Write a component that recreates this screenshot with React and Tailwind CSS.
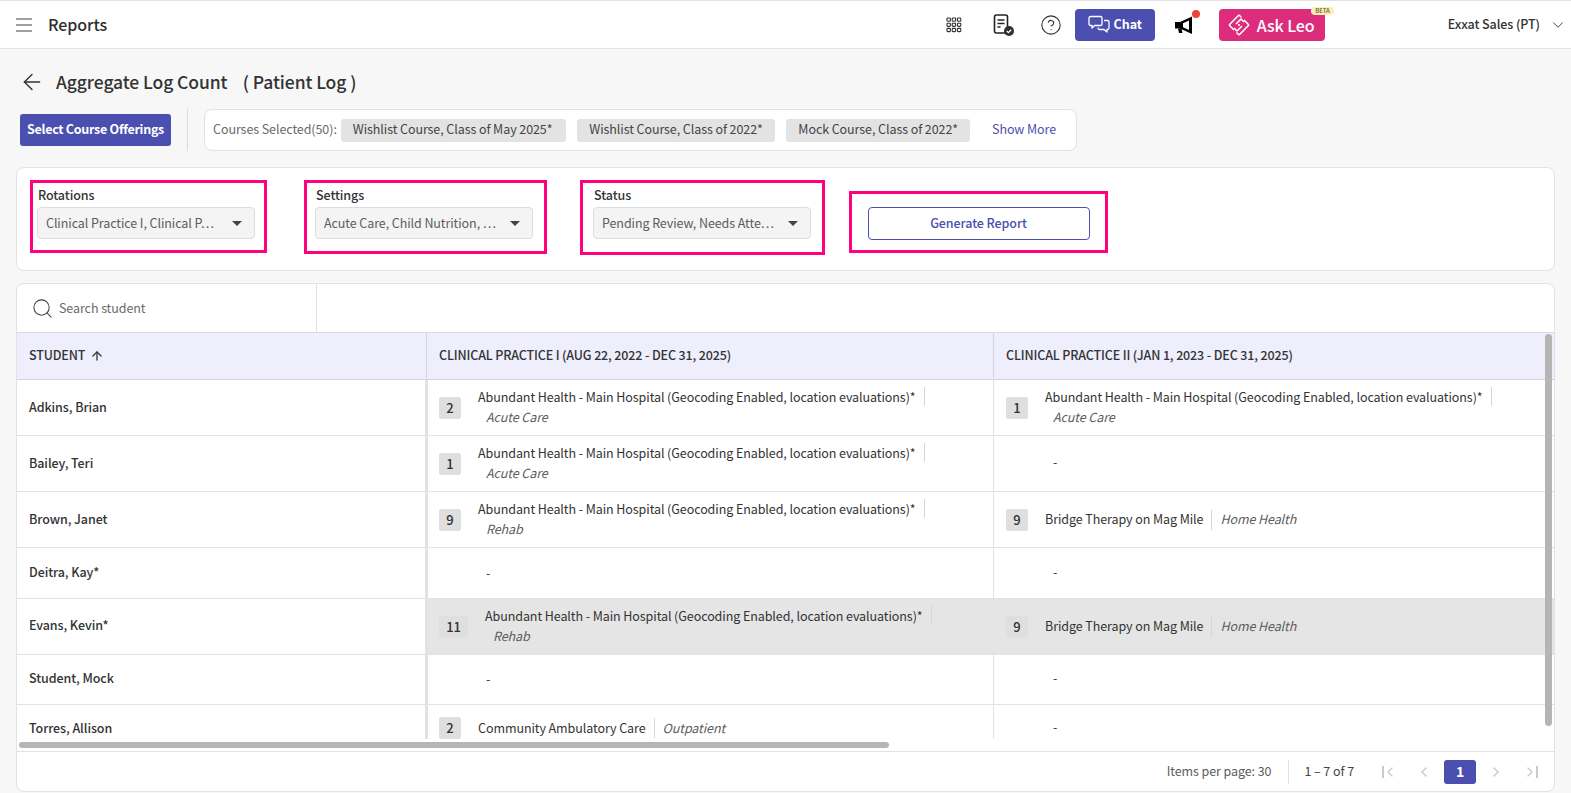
import React from "react";
import { ArrowLeft, ArrowUp, Search, ChevronDown, ChevronLeft, ChevronRight, CircleHelp } from "lucide-react";

const FONT = { fontFamily: '"Noto Sans CJK SC", "Noto Sans", sans-serif' };
const ABH = "Abundant Health - Main Hospital (Geocoding Enabled, location evaluations)*";

function Count({ n, wide }) {
  return (
    <span className={`flex h-[22px] shrink-0 items-center justify-center rounded-[2px] bg-[#dfdfdf] text-[13px] font-medium text-[#333] ${wide ? "w-[29px]" : "w-[22px]"}`}>{n}</span>
  );
}

function Two({ n, name, tag, wide }) {
  return (
    <div className="flex items-center">
      <Count n={n} wide={wide} />
      <div className="ml-[17px] flex flex-col pb-[2px]">
        <div className="flex h-[20px] items-center leading-[20px]">
          <span>{name}</span>
          <span className="ml-[8px] h-[19px] w-px bg-[#d6d6d6]" />
        </div>
        <div className="pl-[8px] leading-[20px] italic text-[#5c5c5c]">{tag}</div>
      </div>
    </div>
  );
}

function One({ n, name, tag, up }) {
  return (
    <div className="flex items-center">
      <Count n={n} />
      <span className={`ml-[17px] leading-[20px] ${up ? "pb-[2px]" : ""}`}>{name}</span>
      <span className="ml-[8px] h-[20px] w-px bg-[#d6d6d6]" />
      <span className={`ml-[8px] italic leading-[20px] text-[#5c5c5c] ${up ? "pb-[2px]" : ""}`}>{tag}</span>
    </div>
  );
}

function Dash() {
  return <span className="ml-[47px] pb-[2px]">-</span>;
}

const rows = [
  { s: "Adkins, Brian", h: "h-[56px]", a: <Two n="2" name={ABH} tag="Acute Care" />, b: <Two n="1" name={ABH} tag="Acute Care" /> },
  { s: "Bailey, Teri", h: "h-[56px]", a: <Two n="1" name={ABH} tag="Acute Care" />, b: <Dash /> },
  { s: "Brown, Janet", h: "h-[56px]", a: <Two n="9" name={ABH} tag="Rehab" />, b: <One up n="9" name="Bridge Therapy on Mag Mile" tag="Home Health" /> },
  { s: "Deitra, Kay*", h: "h-[51px]", up: true, a: <Dash />, b: <Dash /> },
  { s: "Evans, Kevin*", h: "h-[56px]", up: true, hi: true, a: <Two n="11" name={ABH} tag="Rehab" wide />, b: <One up n="9" name="Bridge Therapy on Mag Mile" tag="Home Health" /> },
  { s: "Student, Mock", h: "h-[50px]", up: true, a: <Dash />, b: <Dash /> },
  { s: "Torres, Allison", h: "h-[47px]", a: <One n="2" name="Community Ambulatory Care" tag="Outpatient" />, b: <Dash /> },
];

function Filter({ label, value, box, pad }) {
  return (
    <div className={`flex flex-col border-[3px] border-[#ff007f] pt-[3px] ${box} ${pad}`}>
      <span className="ml-[1px] text-[12.5px] leading-[18px] font-medium text-[#333]">{label}</span>
      <div className="mt-[3px] flex h-[32px] w-[218px] items-center justify-between rounded-[4px] border border-[#dcdcdc] bg-[#f4f4f4] pl-[8px] pr-[12px] text-[#5c5c5c]">
        <span>{value}</span>
        <span className="h-0 w-0 border-x-[5px] border-t-[5px] border-x-transparent border-t-[#444]" />
      </div>
    </div>
  );
}

function Chip({ children, w }) {
  return <span className={`flex h-[23px] items-center rounded-[3px] bg-[#e3e3e3] px-[12px] pb-[1px] text-[#444] ${w || ""}`}>{children}</span>;
}

function Hamburger() {
  return (
    <svg width="16" height="14" viewBox="0 0 16 14" fill="none" stroke="#444" strokeWidth="1.1">
      <path d="M0 1h16M0 7h16M0 13h16" />
    </svg>
  );
}

function DocCheck() {
  return (
    <svg width="24" height="24" viewBox="0 0 24 24" fill="none">
      <rect x="2.5" y="2" width="13" height="18" rx="2" stroke="#222" strokeWidth="1.6" />
      <path d="M5.5 7h7M5.5 10.5h7M5.5 14h3" stroke="#222" strokeWidth="1.5" />
      <circle cx="17" cy="18" r="5" fill="#2b2f38" />
      <path d="M14.8 18l1.6 1.6 2.8-2.8" stroke="#fff" strokeWidth="1.3" />
    </svg>
  );
}

function ChatIcon() {
  return (
    <svg width="22" height="20" viewBox="0 0 22 20" fill="none" stroke="#fff" strokeWidth="1.3" strokeLinejoin="round">
      <path d="M2.5 1.5h10a1.5 1.5 0 0 1 1.5 1.5v6a1.5 1.5 0 0 1-1.5 1.5H6.5L4 13v-2.5H2.5A1.5 1.5 0 0 1 1 9V3a1.5 1.5 0 0 1 1.5-1.5z" />
      <path d="M16 5.5h3.5A1.5 1.5 0 0 1 21 7v6a1.5 1.5 0 0 1-1.5 1.5H19V17l-3-2.5h-4.5A1.5 1.5 0 0 1 10 13v-.5" />
    </svg>
  );
}

function MegaphoneIcon() {
  return (
    <svg width="20" height="20" viewBox="0 0 20 20">
      <path d="M1 7h5v6.5H1z" fill="#000" />
      <path d="M4 13.5h3.5l1 4.5H5z" fill="#000" />
      <path d="M6 7l12-5.5V19L6 13.5z" fill="#000" />
      <path d="M9 8.3l6-2.8v9.6l-6-2.8z" fill="#fff" />
    </svg>
  );
}

function LeoLogo() {
  return (
    <svg width="22" height="22" viewBox="0 0 22 22" fill="none" stroke="#fff" strokeWidth="1.5" strokeLinejoin="round">
      <path d="M13.5 3.5 L11.8 1.8 Q11 1 10.2 1.8 L1.8 10.2 Q1 11 1.8 11.8 L6 16" />
      <path d="M8 10 L13 5 L16 8" />
      <path d="M8.5 18.5 L10.2 20.2 Q11 21 11.8 20.2 L20.2 11.8 Q21 11 20.2 10.2 L16 6" />
      <path d="M14 12 L9 17 L6 14" />
      <circle cx="11" cy="11" r="1.1" fill="#fff" stroke="none" />
    </svg>
  );
}

function Grid9() {
  return (
    <svg width="16" height="16" viewBox="0 0 16 16" fill="none" stroke="#333" strokeWidth="1.1">
      {[1, 6.2, 11.4].flatMap((y) => [1, 6.2, 11.4].map((x) => <rect key={`${x}-${y}`} x={x} y={y} width="3.4" height="3.2" rx="0.8" />))}
    </svg>
  );
}

export default function App() {
  return (
    <div style={FONT} className="flex h-[793px] w-[1571px] flex-col overflow-hidden whitespace-nowrap bg-[#f7f7f7] text-[12.5px] tracking-[-0.08px] text-[#333]">
      {/* top bar */}
      <header className="flex h-[49px] shrink-0 items-center border-y border-[#e2e2e2] bg-white pl-[16px] pr-[4px]">
        <Hamburger />
        <span className="ml-[16px] pb-[2px] text-[16px] font-medium text-[#2e2e2e]">Reports</span>
        <div className="ml-auto flex items-center">
          <Grid9 />
          <span className="ml-[30px]"><DocCheck /></span>
          <CircleHelp size={22} strokeWidth={1.2} className="ml-[24px]" />
          <button className="ml-[13px] flex h-[32px] w-[80px] items-center justify-center gap-[4px] rounded-[4px] bg-[#4a4fb0] text-[12.5px] font-bold text-white">
            <ChatIcon />
            Chat
          </button>
          <span className="relative ml-[19px] flex w-[20px]">
            <MegaphoneIcon />
            <span className="absolute right-[-6px] top-[-5px] h-[8px] w-[8px] rounded-full bg-[#f0443a]" />
          </span>
          <span className="relative ml-[25px] flex h-[32px] w-[106px] items-center gap-[7px] rounded-[4px] bg-[#de2c7d] pl-[9px] text-[16px] font-medium text-white">
            <LeoLogo />
            Ask Leo
            <span className="absolute right-[-9px] top-[-2px] rounded-full bg-[#fbeeb8] px-[4px] text-[6px] leading-[8px] text-[#6a5a20]">BETA</span>
          </span>
          <span className="ml-[123px] font-medium text-[#333]">Exxat Sales (PT)</span>
          <ChevronDown size={18} strokeWidth={1.2} className="ml-[9px]" />
        </div>
      </header>

      {/* title */}
      <div className="mt-[21px] flex h-[24px] items-center pl-[19px]">
        <ArrowLeft size={26} strokeWidth={1.3} />
        <span className="ml-[11px] whitespace-pre text-[17.5px] font-medium leading-[24px] text-[#333]">Aggregate Log Count    ( Patient Log )</span>
      </div>

      {/* course row */}
      <div className="mt-[15px] flex h-[42px] items-center pl-[20px]">
        <button className="h-[32px] w-[151px] rounded-[3px] bg-[#4a4fb0] pb-[1px] font-bold tracking-[-0.28px] text-white">Select Course Offerings</button>
        <span className="ml-[16px] h-[42px] w-px bg-[#dcdcdc]" />
        <div className="ml-[16px] flex h-[42px] w-[873px] items-center rounded-[8px] border border-[#e2e2e2] bg-white pl-[8px]">
          <span className="pb-[1px] text-[#6a6a6a]">Courses Selected(50):</span>
          <span className="ml-[4px] flex items-center gap-[11.5px]">
            <Chip w="w-[225px]">Wishlist Course, Class of May 2025*</Chip>
            <Chip>Wishlist Course, Class of 2022*</Chip>
            <Chip>Mock Course, Class of 2022*</Chip>
          </span>
          <span className="ml-[22px] pb-[1px] text-[#4a4fb0]">Show More</span>
        </div>
      </div>

      {/* filters */}
      <section className="mx-[16px] mt-[16px] flex h-[104px] shrink-0 items-start rounded-[8px] border border-[#e2e2e2] bg-white pl-[13px] pt-[12px]">
        <Filter label="Rotations" value="Clinical Practice I, Clinical P…" box="h-[73px] w-[237px] mr-[37px]" pad="pl-[4px]" />
        <Filter label="Settings" value="Acute Care, Child Nutrition, …" box="h-[74px] w-[243px] mr-[33px]" pad="pl-[8px]" />
        <Filter label="Status" value="Pending Review, Needs Atte…" box="h-[75px] w-[245px] mr-[24px]" pad="pl-[10px]" />
        <div className="mt-[11px] flex h-[62px] w-[259px] justify-center border-[3px] border-[#ff007f] pt-[13px]">
          <button className="h-[33px] w-[222px] rounded-[4px] border border-[#4a4fb0] bg-white font-medium text-[#4a4fb0]">Generate Report</button>
        </div>
      </section>

      {/* table card */}
      <section className="relative mx-[16px] mt-[12px] flex h-[509px] shrink-0 flex-col overflow-hidden rounded-[8px] border border-[#e2e2e2] bg-white">
        <div className="flex h-[49px] shrink-0 border-b border-[#d9d9e3]">
          <div className="flex w-[300px] items-center border-r border-[#e2e2e2] pl-[14px] text-[#6a6a6a]">
            <Search size={23} strokeWidth={1.1} className="text-[#444]" />
            <span className="ml-[5px]">Search student</span>
          </div>
        </div>

        <div className="h-[406px] overflow-hidden">
          <div className="flex h-[47px] border-b border-[#d2d2e0] bg-[#eeeefc] pb-[1px] font-medium tracking-[-0.14px] text-[#333]">
            <div className="flex w-[410px] shrink-0 items-center border-r border-[#d2d2e0] pl-[12px]">
              STUDENT <ArrowUp size={14} strokeWidth={2.2} className="ml-[5px]" />
            </div>
            <div className="flex w-[567px] shrink-0 items-center border-r border-[#d2d2e0] pl-[12px]">CLINICAL PRACTICE I (AUG 22, 2022 - DEC 31, 2025)</div>
            <div className="flex flex-1 items-center pl-[12px]">CLINICAL PRACTICE II (JAN 1, 2023 - DEC 31, 2025)</div>
          </div>
          {rows.map((r) => (
            <div key={r.s} className={`flex shrink-0 border-b border-[#e2e2e2] ${r.h} ${r.hi ? "bg-[#e5e5e5]" : ""}`}>
              <div className={`flex w-[408px] shrink-0 items-center bg-white pl-[12px] font-medium text-[#333] ${r.up ? "pb-[2px]" : ""}`}>{r.s}</div>
              <div className="flex w-[569px] shrink-0 items-center border-l-[3px] border-[#e2e2e2] pl-[11px]">
                <div className="flex-1">{r.a}</div>
                <span className="h-full w-px bg-[#e2e2e2]" />
              </div>
              <div className="flex flex-1 items-center pl-[12px]">{r.b}</div>
            </div>
          ))}
        </div>

        {/* scrollbars */}
        <span className="absolute left-[2px] top-[458px] h-[6px] w-[870px] rounded-full bg-[#b5b5b5]" />
        <span className="absolute right-[2px] top-[50px] h-[392px] w-[7px] rounded-full bg-[#b5b5b5]" />

        {/* footer */}
        <div className="mt-auto flex h-[40px] shrink-0 items-center justify-end border-t border-[#e2e2e2] pr-[16px] text-[#5c5c5c]">
          <span>Items per page: 30</span>
          <span className="ml-[17px] h-[24px] w-px bg-[#e2e2e2]" />
          <span className="ml-[15px] text-[#444]">1 – 7 of 7</span>
          <span className="ml-[28px] flex h-[16px] w-[16px] items-center text-[#c9c9c9]">
            <span className="h-[12px] w-[2px] bg-[#c9c9c9]" />
            <ChevronLeft size={16} strokeWidth={2} className="-ml-[2px]" />
          </span>
          <ChevronLeft size={16} strokeWidth={2} className="ml-[18px] text-[#c9c9c9]" />
          <span className="ml-[12px] flex h-[24px] w-[32px] items-center justify-center rounded-[3px] bg-[#4a4fb0] text-[14px] font-bold text-white">1</span>
          <ChevronRight size={16} strokeWidth={2} className="ml-[12px] text-[#c9c9c9]" />
          <span className="ml-[18px] flex h-[16px] w-[16px] items-center text-[#c9c9c9]">
            <ChevronRight size={16} strokeWidth={2} className="-mr-[2px]" />
            <span className="h-[12px] w-[2px] bg-[#c9c9c9]" />
          </span>
        </div>
      </section>
    </div>
  );
}
